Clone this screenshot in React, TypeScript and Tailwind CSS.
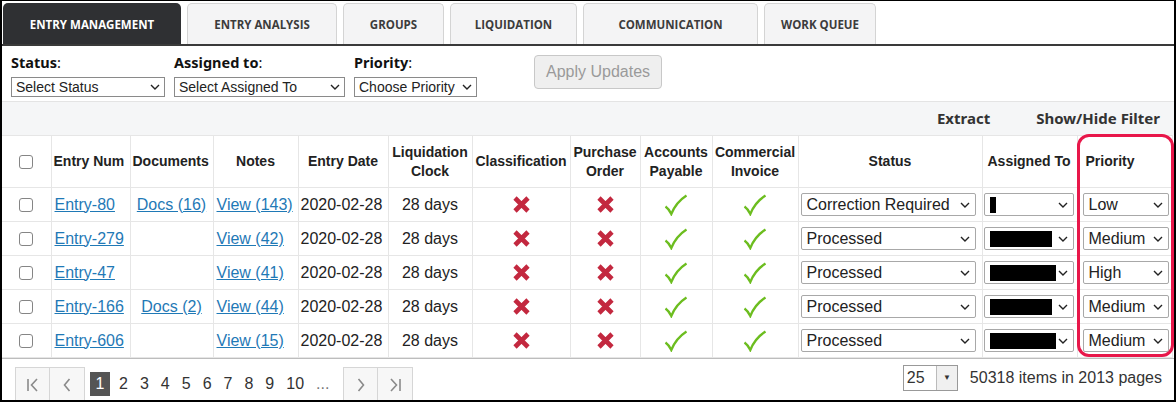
import React from 'react';

const tabs = ['ENTRY MANAGEMENT', 'ENTRY ANALYSIS', 'GROUPS', 'LIQUIDATION', 'COMMUNICATION', 'WORK QUEUE'];
const tabWidths = ['w-[178px]', 'w-[150px]', 'w-[101px]', 'w-[127px]', 'w-[175px]', 'w-[112px]'];

const rows = [
  { num: 'Entry-80', docs: 'Docs (16)', notes: 'View (143)', status: 'Correction Required', assigned: 'w-[6px]', priority: 'Low' },
  { num: 'Entry-279', docs: '', notes: 'View (42)', status: 'Processed', assigned: 'w-[62px]', priority: 'Medium' },
  { num: 'Entry-47', docs: '', notes: 'View (41)', status: 'Processed', assigned: 'w-[66px]', priority: 'High' },
  { num: 'Entry-166', docs: 'Docs (2)', notes: 'View (44)', status: 'Processed', assigned: 'w-[62px]', priority: 'Medium' },
  { num: 'Entry-606', docs: '', notes: 'View (15)', status: 'Processed', assigned: 'w-[66px]', priority: 'Medium' },
];

const Chevron = ({ className = '' }: { className?: string }) => (
  <svg className={className} width="10" height="6" viewBox="0 0 10 6" fill="none">
    <path d="M1 1l4 4 4-4" stroke="#222" strokeWidth="1.4" />
  </svg>
);

const Cross = () => (
  <svg width="19" height="19" viewBox="0 0 19 19">
    <path d="M3 3l13 13M16 3L3 16" stroke="#c3283f" strokeWidth="4.6" strokeLinecap="butt" />
  </svg>
);

const Check = () => (
  <svg width="24" height="22" viewBox="0 0 24 22" fill="none">
    <path d="M1.5 12.5c2.2 1.6 4.2 4 5.8 7.5C10.5 12 15.5 6 22.5 1.5" stroke="#6cbd1f" strokeWidth="2.3" />
  </svg>
);

const Box = () => <div className="mx-auto h-[14px] w-[14px] rounded-[3px] border border-[#858585] bg-white" />;

const FakeSelect = ({ children, className = '' }: { children: React.ReactNode; className?: string }) => (
  <div className={`flex h-[23px] items-center justify-between rounded-[2px] border border-[#a8a8a8] bg-white pl-[5px] pr-[5px] text-[16px] text-[#222] ${className}`}>
    <span className="flex items-center whitespace-nowrap">{children}</span>
    <Chevron />
  </div>
);

const PagerButton = ({ children, first = false }: { children: React.ReactNode; first?: boolean }) => (
  <div
    className={`flex h-[34px] w-[35px] items-center justify-center border border-b-0 border-[#d6d6d6] bg-[#f7f7f7] ${
      first ? '' : 'border-l-0'
    }`}
  >
    {children}
  </div>
);

export default function App() {
  const sans = { fontFamily: '"Liberation Sans", Arial, sans-serif' };
  const noto = { fontFamily: '"Noto Sans", sans-serif' };
  return (
    <div className="relative h-[402px] w-[1176px] overflow-hidden border-t border-r-2 border-b-2 border-l-2 border-black bg-white" style={sans}>
      {/* tabs */}
      <div className="flex h-[45px] items-end gap-[6px] border-b-2 border-[#3a3a3a] pl-[1px]">
        {tabs.map((t, i) => (
          <div
            key={t}
            className={`flex h-[41px] items-center justify-center rounded-t-[5px] pt-[2px] text-[11.5px] font-bold ${tabWidths[i]} ${
              i === 0 ? 'bg-[#2f3033] text-white' : 'border border-b-0 border-[#d4d4d4] bg-[#f4f4f5] text-[#3c3c3c]'
            }`}
            style={{ fontFamily: '"Open Sans", sans-serif' }}
          >
            {t}
          </div>
        ))}
      </div>

      {/* filters */}
      <div className="flex h-[55px] items-start pl-[9px] pt-[7px]">
        <div className="w-[163px]">
          <div className="text-[14.5px] leading-[18px] text-[#111]" style={noto}>
            <span className="font-bold">Status</span>:
          </div>
          <div className="mt-[6px] flex h-[20px] w-[154px] items-center justify-between border border-[#8a8a8a] px-[4px] text-[14px] text-[#222]">
            Select Status <Chevron />
          </div>
        </div>
        <div className="w-[180px]">
          <div className="text-[14.5px] leading-[18px] text-[#111]" style={noto}>
            <span className="font-bold">Assigned to</span>:
          </div>
          <div className="mt-[6px] flex h-[20px] w-[171px] items-center justify-between border border-[#8a8a8a] px-[4px] text-[14px] text-[#222]">
            Select Assigned To <Chevron />
          </div>
        </div>
        <div className="w-[180px]">
          <div className="text-[14.5px] leading-[18px] text-[#111]" style={noto}>
            <span className="font-bold">Priority</span>:
          </div>
          <div className="mt-[6px] flex h-[20px] w-[123px] items-center justify-between border border-[#8a8a8a] px-[4px] text-[14px] text-[#222]">
            Choose Priority <Chevron />
          </div>
        </div>
        <div className="mt-[2px] flex h-[34px] w-[128px] items-center justify-center rounded-[4px] border border-[#c8c8c8] bg-[#efefef] text-[16px] text-[#9a9a9a]">
          Apply Updates
        </div>
      </div>

      {/* toolbar */}
      <div
        className="flex h-[34px] items-center justify-end gap-[46px] border-t border-[#e4e4e4] bg-[#f5f6f7] pr-[14px] text-[15px] font-bold text-[#333]"
        style={noto}
      >
        <span>Extract</span>
        <span>Show/Hide Filter</span>
      </div>

      {/* grid */}
      <table className="w-[1170px] table-fixed border-collapse text-[16px] text-[#222]">
        <colgroup>
          {[49, 79, 83, 85, 90, 84, 98, 70, 72, 86, 184, 95, 95].map((w, i) => (
            <col key={i} style={{ width: w }} />
          ))}
        </colgroup>
        <thead>
          <tr className="h-[52px] text-[14px] font-bold leading-[19px] text-[#222]">
            <th className="border border-l-0 border-[#e6e6e6]"><Box /></th>
            <th className="border border-[#e6e6e6] pl-[2px] text-left">Entry Num</th>
            <th className="border border-[#e6e6e6] pl-[2px] text-left">Documents</th>
            <th className="border border-[#e6e6e6]">Notes</th>
            <th className="border border-[#e6e6e6]">Entry Date</th>
            <th className="border border-[#e6e6e6]">Liquidation<br />Clock</th>
            <th className="border border-[#e6e6e6]">Classification</th>
            <th className="border border-[#e6e6e6]">Purchase<br />Order</th>
            <th className="border border-[#e6e6e6]">Accounts<br />Payable</th>
            <th className="border border-[#e6e6e6]">Commercial<br />Invoice</th>
            <th className="border border-[#e6e6e6]">Status</th>
            <th className="border border-[#e6e6e6] pl-[5px] text-left">Assigned To</th>
            <th className="border border-[#e6e6e6] pl-[8px] text-left">Priority</th>
          </tr>
        </thead>
        <tbody>
          {rows.map((r) => (
            <tr key={r.num} className="h-[34px]">
              <td className="border border-l-0 border-[#e6e6e6]"><Box /></td>
              <td className="border border-[#e6e6e6] pl-[3px]">
                <span className="text-[#1f79b6] underline">{r.num}</span>
              </td>
              <td className="border border-[#e6e6e6] text-center">
                {r.docs && <span className="text-[#1f79b6] underline">{r.docs}</span>}
              </td>
              <td className="border border-[#e6e6e6] pl-[3px]">
                <span className="text-[#1f79b6] underline">{r.notes}</span>
              </td>
              <td className="border border-[#e6e6e6] pl-[2px]">2020-02-28</td>
              <td className="border border-[#e6e6e6] text-center">28 days</td>
              <td className="border border-[#e6e6e6]"><div className="flex justify-center"><Cross /></div></td>
              <td className="border border-[#e6e6e6]"><div className="flex justify-center"><Cross /></div></td>
              <td className="border border-[#e6e6e6]"><div className="flex justify-center"><Check /></div></td>
              <td className="border border-[#e6e6e6]"><div className="flex justify-center"><Check /></div></td>
              <td className="border border-[#e6e6e6] pl-[2px] pr-[6px]">
                <FakeSelect className="w-[175px]">{r.status}</FakeSelect>
              </td>
              <td className="border border-[#e6e6e6] pl-[1px]">
                <FakeSelect className="w-[90px]">
                  <span className={`inline-block h-[16px] bg-black ${r.assigned}`} />
                </FakeSelect>
              </td>
              <td className="border border-[#e6e6e6] pl-[5px]">
                <FakeSelect className="w-[86px]">{r.priority}</FakeSelect>
              </td>
            </tr>
          ))}
        </tbody>
      </table>

      {/* pager */}
      <div className="flex h-[43px] items-end justify-between border-t border-[#bdbdbd] pl-[13px] pr-[12px]">
        <div className="flex items-end text-[16px] text-[#333]">
          <PagerButton first>
            <svg width="14" height="14" viewBox="0 0 14 14" fill="none"><path d="M2 1v12M11 1L5.5 7 11 13" stroke="#8a8a8a" strokeWidth="1.6" /></svg>
          </PagerButton>
          <PagerButton>
            <svg width="10" height="14" viewBox="0 0 10 14" fill="none"><path d="M7.5 1L2.5 7l5 6" stroke="#8a8a8a" strokeWidth="1.6" /></svg>
          </PagerButton>
          <div className="ml-[5px] flex h-[34px] items-center gap-[12px]">
            <span className="flex h-[24px] w-[20px] items-center justify-center bg-[#555] text-white">1</span>
            {['2', '3', '4', '5', '6', '7', '8', '9', '10'].map((n) => (
              <span key={n} className={n === '2' ? '-ml-[3px]' : ''}>{n}</span>
            ))}
            <span className="text-[#777]">...</span>
          </div>
          <div className="ml-[14px] flex">
            <PagerButton first>
              <svg width="10" height="14" viewBox="0 0 10 14" fill="none"><path d="M2.5 1l5 6-5 6" stroke="#8a8a8a" strokeWidth="1.6" /></svg>
            </PagerButton>
            <PagerButton>
              <svg width="14" height="14" viewBox="0 0 14 14" fill="none"><path d="M3 1l5.5 6L3 13M12 1v12" stroke="#8a8a8a" strokeWidth="1.6" /></svg>
            </PagerButton>
          </div>
        </div>
        <div className="mb-[10px] flex items-center text-[16px] text-[#333]">
          <div className="flex h-[26px] items-stretch border border-[#999]">
            <span className="flex w-[32px] items-center pl-[3px]">25</span>
            <span className="flex w-[21px] items-center justify-center border-l border-[#bbb] bg-[#f0f0f0] text-[8px]">▼</span>
          </div>
          <span className="ml-[12px]">50318 items in 2013 pages</span>
        </div>
      </div>

      {/* highlight around priority column */}
      <div className="pointer-events-none absolute left-[1075px] top-[133px] h-[223px] w-[97px] rounded-[12px] border-[3px] border-[#e8174a]" />
    </div>
  );
}
